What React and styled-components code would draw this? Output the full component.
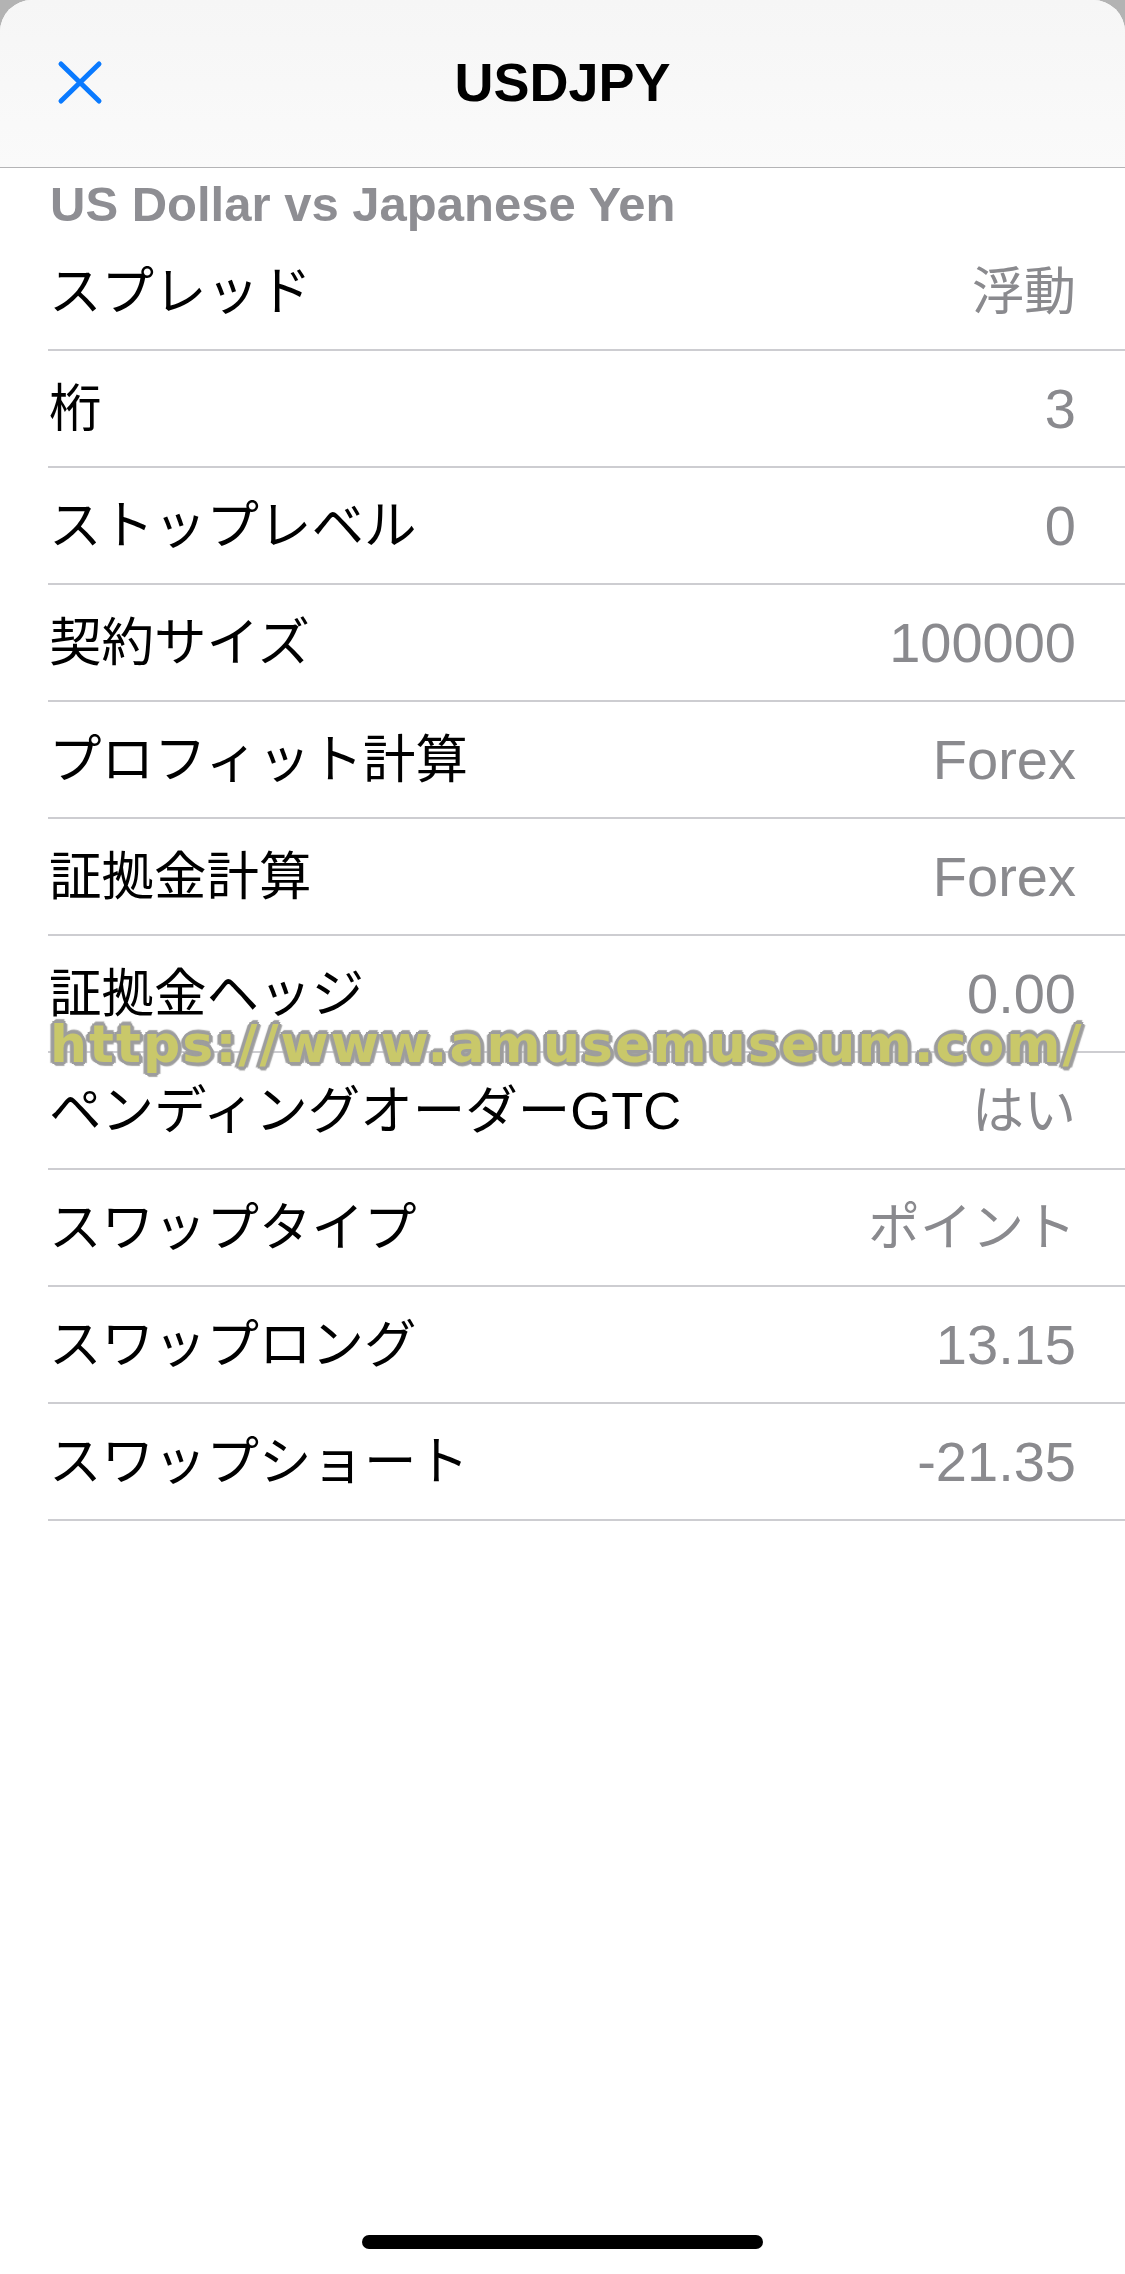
import React from 'react';
import styled, { createGlobalStyle } from 'styled-components';

const GlobalStyle = createGlobalStyle`
  html, body {
    margin: 0;
    padding: 0;
    background: #b3b3b3;
  }
  body {
    font-family: 'Liberation Sans', 'Noto Sans CJK JP', sans-serif;
    -webkit-font-smoothing: antialiased;
  }
`;

const Sheet = styled.div`
  position: relative;
  display: flex;
  flex-direction: column;
  height: 2274px;
  background: #fff;
  border-radius: 32px 32px 0 0;
  overflow: hidden;
`;

const Header = styled.header`
  display: grid;
  grid-template-columns: 1fr auto 1fr;
  align-items: center;
  height: 168px;
  box-sizing: border-box;
  padding: 0 56px 4px;
  background: linear-gradient(#f6f6f6, #fafafa);
  border-bottom: 1.5px solid #b4b4b6;
`;

const CloseButton = styled.button`
  justify-self: start;
  display: flex;
  width: 48px;
  height: 48px;
  padding: 0;
  border: none;
  background: none;
  color: #0a7aff;
`;

const Title = styled.h1`
  margin: 0;
  font-family: 'Liberation Sans', sans-serif;
  font-size: 54px;
  font-weight: 700;
  color: #000;
`;

const Subtitle = styled.h2`
  margin: 7px 0 0 50px;
  font-family: 'Liberation Sans', sans-serif;
  font-size: 49px;
  line-height: 59px;
  font-weight: 700;
  color: #8e8e93;
`;

const List = styled.div`
  position: relative;
  display: flex;
  flex-direction: column;
`;

const Row = styled.div`
  display: flex;
  align-items: center;
  justify-content: space-between;
  height: 117px;
  box-sizing: border-box;
  margin-left: 48px;
  padding: 0 49px 0 1px;
  border-bottom: 2px solid #cdcdd1;
`;

const Label = styled.span`
  font-family: 'Liberation Sans', 'Noto Sans CJK JP', sans-serif;
  font-size: 52.5px;
  line-height: 60px;
  color: #000;
`;

const Value = styled.span`
  font-family: 'Liberation Sans', 'Noto Sans CJK JP', sans-serif;
  font-size: ${(p) => (p.$cjk ? '52px' : '56px')};
  line-height: 64px;
  color: #8a8a8e;
`;

const Watermark = styled.div`
  position: absolute;
  top: 780px;
  left: 50px;
  font-family: 'DejaVu Sans', sans-serif;
  font-weight: 700;
  font-size: 52px;
  line-height: 60px;
  letter-spacing: 2.1px;
  color: #c9c86a;
  white-space: nowrap;
  pointer-events: none;
  text-shadow:
    3px 0 0 #9d9d9d, -3px 0 0 #9d9d9d, 0 3px 0 #9d9d9d, 0 -3px 0 #9d9d9d,
    2px 2px 0 #9d9d9d, -2px 2px 0 #9d9d9d, 2px -2px 0 #9d9d9d, -2px -2px 0 #9d9d9d,
    4px 1px 1px #a8a8a8, -4px 1px 1px #a8a8a8, 1px 4px 1px #a8a8a8, 1px -4px 1px #a8a8a8;
`;

const HomeIndicator = styled.div`
  align-self: center;
  margin-top: auto;
  margin-bottom: 25px;
  width: 401px;
  height: 14px;
  border-radius: 7px;
  background: #000;
`;

const rows = [
  ['スプレッド', '浮動', true],
  ['桁', '3'],
  ['ストップレベル', '0'],
  ['契約サイズ', '100000'],
  ['プロフィット計算', 'Forex'],
  ['証拠金計算', 'Forex'],
  ['証拠金ヘッジ', '0.00'],
  ['ペンディングオーダーGTC', 'はい', true],
  ['スワップタイプ', 'ポイント', true],
  ['スワップロング', '13.15'],
  ['スワップショート', '-21.35'],
];

const CloseIcon = () => (
  <svg width="48" height="48" viewBox="0 0 48 48" fill="none" stroke="currentColor" strokeWidth="5" strokeLinecap="round">
    <path d="M5 6 L43 43 M43 6 L5 43" />
  </svg>
);

const App = () => (
  <>
    <GlobalStyle />
    <Sheet>
      <Header>
        <CloseButton aria-label="閉じる">
          <CloseIcon />
        </CloseButton>
        <Title>USDJPY</Title>
        <span />
      </Header>
      <Subtitle>US Dollar vs Japanese Yen</Subtitle>
      <List>
        {rows.map(([label, value, cjk]) => (
          <Row key={label}>
            <Label>{label}</Label>
            <Value $cjk={cjk}>{value}</Value>
          </Row>
        ))}
        <Watermark>https://www.amusemuseum.com/</Watermark>
      </List>
      <HomeIndicator />
    </Sheet>
  </>
);

export default App;
